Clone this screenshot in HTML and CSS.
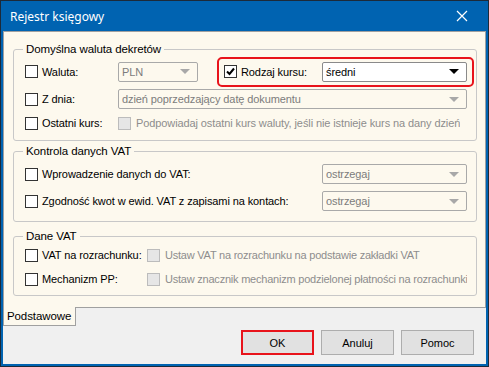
FILE: index.html
```html
<!DOCTYPE html>
<html lang="pl">
<head>
  <meta charset="UTF-8">
  <title>Rejestr księgowy</title>
  <link rel="stylesheet" href="styles.css">
</head>
<body>
  <div class="window">
    <!-- pasek tytułu -->
    <div class="titlebar">
      <span class="title">Rejestr księgowy</span>
      <svg class="close" width="12" height="12" viewBox="0 0 12 12">
        <path d="M1 1 L11 11 M11 1 L1 11" stroke="#fff" stroke-width="1.2" fill="none"/>
      </svg>
    </div>

    <div class="client">
      <div class="tabpage">
        <!-- waluta -->
        <fieldset class="group g1">
          <legend>Domyślna waluta dekretów</legend>
          <div class="row r1">
            <label class="lbl w93"><span class="cb"></span>Waluta:</label>
            <div class="select dis s80"><span>PLN</span><i class="arrow"></i></div>
            <div class="highlight">
              <label class="lbl w98"><span class="cb checked"><svg width="11" height="11" viewBox="0 0 11 11"><path d="M2 5.5 L4.5 8 L9 2.5" stroke="#000" stroke-width="2" fill="none"/></svg></span>Rodzaj kursu:</label>
              <div class="select on grow"><span>średni</span><i class="arrow"></i></div>
            </div>
          </div>
          <div class="row">
            <label class="lbl w93"><span class="cb"></span>Z dnia:</label>
            <div class="select dis grow"><span>dzień poprzedzający datę dokumentu</span><i class="arrow"></i></div>
          </div>
          <div class="row">
            <label class="lbl w93"><span class="cb"></span>Ostatni kurs:</label>
            <span class="cb dis"></span><span class="distext">Podpowiadaj ostatni kurs waluty, jeśli nie istnieje kurs na dany dzień</span>
          </div>
        </fieldset>

        <!-- kontrola VAT -->
        <fieldset class="group g2">
          <legend>Kontrola danych VAT</legend>
          <div class="row">
            <label class="lbl w297"><span class="cb"></span>Wprowadzenie danych do VAT:</label>
            <div class="select dis grow"><span>ostrzegaj</span><i class="arrow"></i></div>
          </div>
          <div class="row">
            <label class="lbl w297"><span class="cb"></span>Zgodność kwot w ewid. VAT z zapisami na kontach:</label>
            <div class="select dis grow"><span>ostrzegaj</span><i class="arrow"></i></div>
          </div>
        </fieldset>

        <!-- dane VAT -->
        <fieldset class="group g3">
          <legend>Dane VAT</legend>
          <div class="row">
            <label class="lbl w122"><span class="cb"></span>VAT na rozrachunku:</label>
            <span class="cb dis"></span><span class="distext">Ustaw VAT na rozrachunku na podstawie zakładki VAT</span>
          </div>
          <div class="row">
            <label class="lbl w122"><span class="cb"></span>Mechanizm PP:</label>
            <span class="cb dis"></span><span class="distext">Ustaw znacznik mechanizm podzielonej płatności na rozrachunki</span>
          </div>
        </fieldset>
      </div>

      <div class="tabs">
        <div class="tab">Podstawowe</div>
        <div class="tabline"></div>
      </div>

      <div class="buttons">
        <button class="btn ok">OK</button>
        <button class="btn">Anuluj</button>
        <button class="btn">Pomoc</button>
      </div>
    </div>
  </div>
</body>
</html>
```
FILE: styles.css
```css
body {
  margin: 0;
  font-family: "Liberation Sans", Arial, sans-serif;
  font-size: 11px;
  letter-spacing: -0.1px;
  color: #000;
}
.window {
  width: 489px;
  height: 367px;
  box-sizing: border-box;
  border: 1px solid #1c2a3a;
  background: #0063b1;
  display: flex;
  flex-direction: column;
}
.titlebar {
  height: 30px;
  display: flex;
  align-items: center;
  justify-content: space-between;
  padding: 0 20px 0 9px;
  color: #fff;
  letter-spacing: 0;
}
.title {
  font-family: "Noto Sans", sans-serif;
  font-size: 12px;
}
.client {
  flex: 1;
  margin: 0 2px 2px 2px;
  background: #f0f0f0;
  display: flex;
  flex-direction: column;
}
.tabpage {
  height: 276px;
  box-sizing: border-box;
  background: #fdf9ee;
  border: 1px solid #a0a0a0;
  border-bottom: none;
  padding: 11px 8px 0 9px;
}
.group {
  margin: 0;
  min-width: 0;
  border: 1px solid #c8c8c8;
  border-radius: 3px;
  padding: 0 9px 5px 11px;
}
.group legend {
  padding: 0 3px;
  margin-left: -2px;
  line-height: 13px;
  font-size: 11.5px;
}
.g2 {
  margin-top: 4px;
  padding-top: 4px;
  padding-bottom: 8px;
}
.g2 .row + .row {
  margin-top: 3px;
}
.g3 {
  margin-top: 8px;
  padding-bottom: 4px;
}
.g3 .distext {
  letter-spacing: -0.22px;
}
.row {
  display: flex;
  align-items: center;
  height: 24px;
  min-width: 0;
}
.r1 {
  height: 31px;
}
.lbl {
  display: flex;
  align-items: center;
  flex-shrink: 0;
  white-space: nowrap;
}
.w93 { width: 93px; }
.w98 { width: 98px; }
.w122 { width: 122px; }
.w297 { width: 297px; }
.cb {
  width: 11px;
  height: 11px;
  border: 1px solid #333;
  background: #fff;
  margin-right: 4px;
  flex-shrink: 0;
  display: inline-flex;
  align-items: center;
  justify-content: center;
}
.cb.dis {
  border-color: #bcbcbc;
  background: #e6e6e6;
  margin-right: 5px;
}
.distext {
  color: #8d8d8d;
  white-space: nowrap;
  overflow: hidden;
  min-width: 0;
}
.select {
  height: 20px;
  min-width: 0;
  flex-shrink: 0;
  box-sizing: border-box;
  border: 1px solid #a9a9a9;
  border-radius: 2px;
  display: flex;
  align-items: center;
  justify-content: space-between;
  padding: 0 7px 0 3px;
}
.select.dis {
  color: #7c7c7c;
}
.select.on {
  background: #fff;
  border-color: #8a8a8a;
}
.s80 { width: 80px; }
.grow { flex: 1 1 0; }
.arrow {
  width: 0;
  height: 0;
  border-left: 5px solid transparent;
  border-right: 5px solid transparent;
  border-top: 5px solid #a8a8a8;
}
.select.on .arrow {
  border-top-color: #000;
}
.highlight {
  flex: 1 1 0;
  min-width: 0;
  display: flex;
  align-items: center;
  margin-left: 19px;
  margin-right: -7px;
  height: 30px;
  box-sizing: border-box;
  border: 2px solid #e8131b;
  border-radius: 5px;
  padding: 0 5px;
}
.tabs {
  display: flex;
  height: 19px;
}
.tab {
  width: 73px;
  box-sizing: border-box;
  background: #fdf9ee;
  border: 1px solid #a0a0a0;
  border-top: none;
  padding: 2px 0 0 3px;
  line-height: 14px;
  font-size: 11.5px;
}
.tabline {
  flex: 1;
  border-top: 1px solid #a0a0a0;
}
.buttons {
  display: flex;
  justify-content: flex-end;
  gap: 7px;
  padding: 4px 12px 0 0;
}
.btn {
  width: 73px;
  height: 25px;
  font-family: "Liberation Sans", Arial, sans-serif;
  font-size: 11px;
  background: #e1e1e1;
  border: 1px solid #adadad;
}
.btn.ok {
  border: 2px solid #e8131b;
}
```
